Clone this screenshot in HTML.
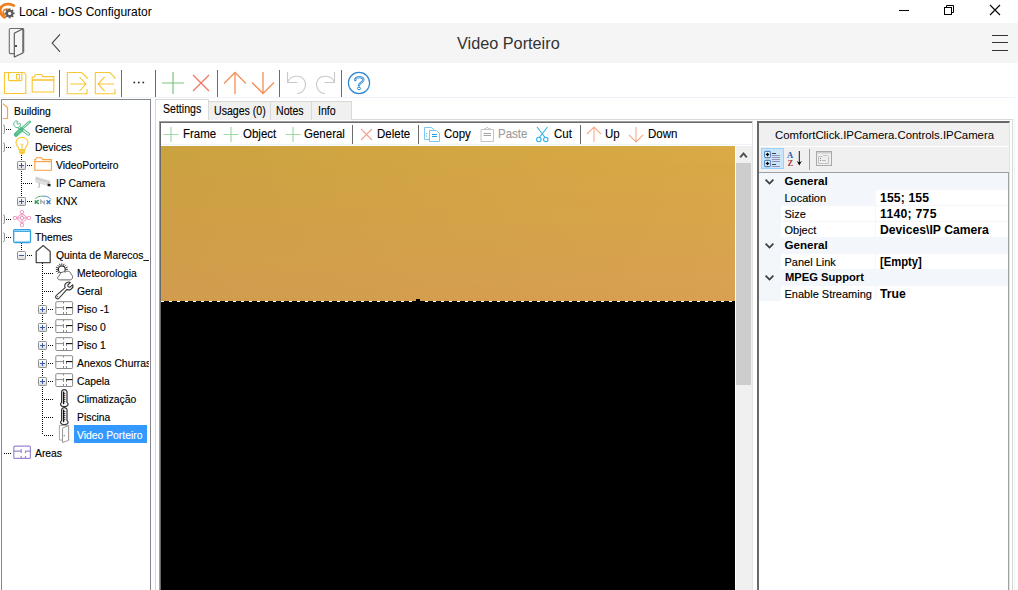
<!DOCTYPE html>
<html><head><meta charset="utf-8">
<style>
*{margin:0;padding:0;box-sizing:border-box}
html,body{width:1018px;height:590px;overflow:hidden;background:#fff;font-family:"Liberation Sans",sans-serif;color:#000}
.a{position:absolute}
.t{position:absolute;white-space:nowrap;line-height:1}
svg{position:absolute;overflow:visible}
.tr{font-size:11.5px;-webkit-text-stroke:0.15px currentColor;transform:scaleX(0.9);transform-origin:0 0;color:#000}
.tb{font-size:12.5px;-webkit-text-stroke:0.12px currentColor;transform:scaleX(0.92);transform-origin:0 0;color:#000}
.pg{font-size:11px;-webkit-text-stroke:0.12px currentColor;color:#000}
.tt{font-size:12.3px;-webkit-text-stroke:0.12px currentColor;transform:scaleX(0.86);transform-origin:0 0;color:#000}
.pc{font-size:11.6px;font-weight:bold;color:#000}
.pb{font-size:12.2px;font-weight:bold;color:#000}
</style></head><body>
<svg style="left:0;top:0" width="20" height="22" viewBox="0 0 20 22">
<path d="M13.8 5.6 C10.5 3.6 4.6 3.4 1.6 6.6 C-0.8 9.2 -0.4 14.4 4.6 17.4" fill="none" stroke="#ef7d1a" stroke-width="2.8" stroke-linecap="round"/>
<path d="M8.6 9.4 C6 8.6 3.4 9.6 3.2 11.8 C3 13.4 4 14.6 5.2 15" fill="none" stroke="#ef7d1a" stroke-width="1.6" stroke-linecap="round"/>
<g transform="translate(9.6 13.4)" fill="#5a5a5a">
<circle r="3.5"/>
<rect x="-1" y="-4.9" width="2" height="9.8"/>
<rect x="-1" y="-4.9" width="2" height="9.8" transform="rotate(45)"/>
<rect x="-1" y="-4.9" width="2" height="9.8" transform="rotate(90)"/>
<rect x="-1" y="-4.9" width="2" height="9.8" transform="rotate(135)"/>
<circle r="1.6" fill="#fff"/>
</g></svg><div class="t" style="left:19px;top:6px;font-size:12px;color:#000">Local - bOS Configurator</div><svg style="left:0;top:0" width="1018" height="22">
<line x1="899" y1="10.5" x2="909" y2="10.5" stroke="#000" stroke-width="1"/>
<rect x="944.5" y="7.5" width="7" height="7" fill="none" stroke="#000" stroke-width="1"/>
<path d="M946.5 7.5 V5.5 H953.5 V12.5 H951.5" fill="none" stroke="#000" stroke-width="1"/>
<path d="M990 5 L1000 15 M1000 5 L990 15" stroke="#000" stroke-width="1.1"/>
</svg><div class="a" style="left:0;top:23px;width:1018px;height:40px;background:#f5f5f5"></div><svg style="left:0;top:23px" width="80" height="40" viewBox="0 23 80 40">
<path d="M14.3 53.6 H10.3 Q9.3 53.6 9.3 52.6 V29.5 Q9.3 28.5 10.3 28.5 H22.7 Q23.7 28.5 23.7 29.5 V52.6" fill="none" stroke="#6e6e6e" stroke-width="1.1"/>
<path d="M14.3 33.3 L22.9 28.8 L22.9 52.9 L14.3 57 Z" fill="#f5f5f5" stroke="#555" stroke-width="1.1" stroke-linejoin="round"/>
<circle cx="16" cy="46" r="0.9" fill="#000"/>
<path d="M60 34.3 L52.2 43.1 L60 51.9" fill="none" stroke="#444" stroke-width="1.1"/>
</svg><div class="t" style="left:457px;top:35px;font-size:16.25px;color:#333">Video Porteiro</div><svg style="left:980px;top:23px" width="38" height="40" viewBox="980 23 38 40">
<path d="M992 35.5 H1008 M992 42.5 H1008 M992 50.5 H1008" stroke="#333" stroke-width="1.1"/>
</svg><svg style="left:0;top:63px" width="400" height="36" viewBox="0 63 400 36">
<g fill="none" stroke="#f9c633" stroke-width="1.1">
<path d="M4.5 72.5 H24 L25.8 74.5 V93.5 H4.5 Z"/>
<path d="M8.5 72.5 V79.8 Q8.5 80.6 9.3 80.6 H21 Q21.8 80.6 21.8 79.8 V72.5"/>
<rect x="16.5" y="74.5" width="3" height="4.5"/>
<path d="M32.2 92 V77 H34.5 L35.3 74.5 H41.8 L42.6 76.6 H53.8 V92 Z"/>
<path d="M32.2 80 H53.8" stroke-width="1.6"/>
<path d="M87 79 V77.5 L81.5 72.5 H67.3 V93.8 H87 V89"/>
<path d="M70.2 84 H86 M79.5 77 L86 84 L79.5 91"/>
<path d="M115 79 V77.5 L109.5 72.5 H95.3 V93.8 H115 V89"/>
<path d="M98 84 H114 M104.6 77 L98 84 L104.6 91"/>
</g>
<g fill="#222"><rect x="133.5" y="81.7" width="1.6" height="1.6"/><rect x="138" y="81.7" width="1.6" height="1.6"/><rect x="142.5" y="81.7" width="1.6" height="1.6"/></g>
<g stroke="#6b6b6b" stroke-width="1">
<line x1="59.5" y1="70" x2="59.5" y2="97"/><line x1="121.5" y1="70" x2="121.5" y2="97"/>
<line x1="155.5" y1="70" x2="155.5" y2="97"/><line x1="217.5" y1="70" x2="217.5" y2="97"/>
<line x1="279.5" y1="70" x2="279.5" y2="97"/><line x1="341.5" y1="70" x2="341.5" y2="97"/>
</g>
<path d="M162 83 H184 M173 72 V94" stroke="#7cc47f" stroke-width="1.2"/>
<path d="M193 75 L209 91 M209 75 L193 91" stroke="#ef7663" stroke-width="1.2"/>
<path d="M235 72.5 V94 M224 83.5 L235 72.5 L246 83.5" fill="none" stroke="#f58f55" stroke-width="1.3"/>
<path d="M263 72 V93.5 M252 82.5 L263 93.5 L274 82.5" fill="none" stroke="#f58f55" stroke-width="1.3"/>
<g fill="none" stroke="#c9c9c9" stroke-width="1.1">
<path d="M287.5 72 V82.5 H297.5"/><path d="M288 81.5 C291 75 301 74.5 304.5 80.5 C307.5 86.5 303 93.5 297 93.5"/>
<path d="M334.5 72 V82.5 H324.5"/><path d="M334 81.5 C331 75 321 74.5 317.5 80.5 C314.5 86.5 319 93.5 325 93.5"/>
</g>
<circle cx="359" cy="83" r="10.6" fill="none" stroke="#2f86d6" stroke-width="1.2"/>
<path d="M355.2 80.2 C355 76.6 363.4 76 363.4 79.8 C363.4 82.4 359.2 82.4 359 85.4" fill="none" stroke="#2f86d6" stroke-width="2.3" stroke-linecap="round"/>
<path d="M355.2 80.2 C355 76.6 363.4 76 363.4 79.8 C363.4 82.4 359.2 82.4 359 85.4" fill="none" stroke="#fff" stroke-width="0.6"/>
<ellipse cx="359" cy="88.4" rx="1.6" ry="1.2" fill="none" stroke="#2f86d6" stroke-width="1"/>
</svg><div class="a" style="left:0;top:97px;width:1015px;height:1px;background:#f0f2f9"></div><div class="a" style="left:1px;top:99px;width:150px;height:500px;border:1px solid #828790;background:#fff;overflow:hidden"><svg style="left:-2px;top:-100px" width="1018" height="590" viewBox="0 0 1018 590"><defs>
<linearGradient id="bx" x1="0" y1="0" x2="0" y2="1"><stop offset="0" stop-color="#fff"/><stop offset="1" stop-color="#dcdcdc"/></linearGradient>
<g id="i_house_o"><path d="M0 17 V5.5 L8 -0.5 L15.5 5.5 V16.5 H2" fill="none" stroke="#f6a24e" stroke-width="1.2"/></g>
<g id="i_tools" fill="none" stroke="#4fbb85">
 <path d="M5.6 7 L15.6 14.2" stroke-width="3" stroke-linecap="round"/>
 <path d="M5.6 7 L15.6 14.2" stroke="#fff" stroke-width="1.1" stroke-linecap="round"/>
 <path d="M3 0.8 C0.8 1.8 0 4.6 1.6 6.4 C3 8 5.6 8 6.8 6.6 C7.6 5.6 7.6 4 6.9 3 L5.2 4.4 L3.8 3.4 L4.8 1.4 Z" fill="#fff" stroke-width="1"/>
 <path d="M16.8 1.8 L9.6 8" stroke-width="2.6" stroke-linecap="round"/>
 <path d="M16.8 1.8 L9.6 8" stroke="#fff" stroke-width="0.8"/>
 <path d="M8.4 9.6 L3 14.6" stroke-width="4.4" stroke-linecap="round"/>
 <path d="M6.8 10.2 L3.4 13.4 M8.2 11.6 L4.8 14.8" stroke="#a8e0c2" stroke-width="0.6"/>
</g>
<g id="i_bulb"><path d="M6 11.5 C6 9 3 7.6 3 4.6 C3 1.6 5.6 -0.6 9 -0.6 C12.4 -0.6 15 1.6 15 4.6 C15 7.6 12 9 12 11.5 Z" fill="#fff" stroke="#f9c633" stroke-width="1.1"/>
 <path d="M7.3 6 L9 7.4 L10.7 6 M9 7.4 V11.5" fill="none" stroke="#f9c633" stroke-width="1"/>
 <rect x="6" y="11.5" width="6" height="3.6" fill="#f9c633"/><path d="M6.5 13.2 H11.5" stroke="#fde59a" stroke-width="0.7"/><path d="M7 15 H11 L10 16.6 H8 Z" fill="#f9c633"/></g>
<g id="i_folder" fill="none" stroke="#f9a040" stroke-width="1.1"><path d="M0.8 14.2 V3.6 H1.4 L2.6 1.7 H7.6 L8.8 3.6 H17.4 V14.2 Z"/><path d="M0.8 5.6 H17.4"/></g>
<g id="i_camera"><path d="M1.8 2.6 L16 6.8 L16.4 9.6 L1.2 5.6 Z" fill="#c9c9c9"/><path d="M1.2 5.6 L16.4 9.6 L16 12.4 L1.6 8.4 Z" fill="#dedede"/><path d="M2.2 3.4 L15.4 7.2" stroke="#eee" stroke-width="0.6"/><path d="M13.6 9.6 L16.6 10.2 L16.4 12.6 L13.6 12 Z" fill="#1a1a1a"/><path d="M5 8.8 L5.6 12.2 L4.4 13.6" fill="none" stroke="#bdbdbd" stroke-width="1.2"/></g>
<g id="i_knx" fill="none"><path d="M1.2 6.8 C3 4.8 6 4.1 8.8 4.1" stroke="#44a85c" stroke-width="0.9"/><path d="M8.8 4.1 C12 4.1 15.6 5 16.8 7.4" stroke="#3a86c8" stroke-width="0.9"/>
 <path d="M1.4 8.2 V11.9 M4.8 8.2 L2 10 L5 11.9" stroke="#3a9e4e" stroke-width="1.4"/>
 <path d="M6.8 11.9 V8.2 L10.4 11.6 V8.2" stroke="#a8a8b2" stroke-width="1.3"/>
 <path d="M12.6 8.2 L16.4 11.9 M16.4 8.2 L12.6 11.9" stroke="#2a7cc7" stroke-width="1.4"/></g>
<g id="i_tasks" fill="none" stroke="#f08bbd" stroke-width="1"><path d="M9 3.5 L3.5 8 L9 13.5 L14.5 8 Z M9 3.5 V13.5 M3.5 8 H14.5"/>
 <g fill="#fff"><rect x="7.5" y="0.5" width="3" height="3" rx="0.8"/><rect x="7.5" y="13.5" width="3" height="3" rx="0.8"/><rect x="0.5" y="6.5" width="3" height="3" rx="0.8"/><rect x="14.5" y="6.5" width="3" height="3" rx="0.8"/><rect x="7.5" y="6.5" width="3" height="3" rx="0.8"/></g></g>
<g id="i_themes"><rect x="0.7" y="1.7" width="16.8" height="12.8" rx="1.2" fill="#fff" stroke="#2ea0e4" stroke-width="1.3"/><path d="M1.3 3.3 H16.9" stroke="#2ea0e4" stroke-width="1.2"/><path d="M1.5 13.4 H16.7" stroke="#9ad4f6" stroke-width="1"/></g>
<g id="i_house"><path d="M2.2 16.6 V5.4 L9.2 -0.4 L16.2 5.4 V16.6 Z" fill="#fff" stroke="#4a4a4a" stroke-width="1.3" stroke-linejoin="round"/></g>
<g id="i_weather"><g stroke="#222" stroke-width="0.9"><path d="M6.8 -0.6 V1.6 M6.8 9.2 V11.4 M0.8 5.4 H3 M10.6 5.4 H12.8 M2.6 1.2 L4.1 2.7 M11 1.2 L9.5 2.7 M2.6 9.6 L4.1 8.1 M4.5 -0.2 L5.2 1.7 M9.1 -0.2 L8.4 1.7 M0.9 3.1 L2.9 3.9 M0.9 7.7 L2.9 6.9 M12.7 3.1 L10.7 3.9"/></g><circle cx="6.8" cy="5.4" r="3.4" fill="#fff" stroke="#222" stroke-width="1.1"/>
 <path d="M4.5 15.8 C2.2 15.8 2 12.2 4.4 11.8 C4.8 8.8 8 7.2 10.6 8 C11.8 6.6 15.6 6.8 16 10.4 C18.4 11 18 15.8 15.4 15.8 Z" fill="#fff" stroke="#666" stroke-width="1"/><path d="M5 16.2 H15" stroke="#bbb" stroke-width="1"/></g>
<g id="i_wrench"><path d="M17.6 2.8 L15 5.2 L13.2 4.8 L12.8 3 L15.4 0.4 C13.2 -0.6 10.4 0.6 9.8 3 C9.6 4 9.8 4.8 10.2 5.6 L1.4 13.4 C0.2 14.4 0.4 16 1.6 16.6 C2.6 17.2 3.6 16.8 4.2 16 L12 7.4 C13 7.9 14.4 8 15.6 7.4 C17.6 6.4 18.4 4.4 17.6 2.8 Z" fill="#fff" stroke="#333" stroke-width="1.1" stroke-linejoin="round"/><circle cx="2.6" cy="14.6" r="0.7" fill="#555"/></g>
<g id="i_floor" fill="none" stroke="#8a8a8a" stroke-width="1"><rect x="0.8" y="1.7" width="16.8" height="12.8" rx="0.8"/><path d="M0.8 7.6 H8.5 M8.5 1.7 V3.5 M8.5 6 V10 M8.5 12 V14.5 M11.5 8 V10 M11.5 12 V14.5"/><path d="M11 7.6 H17.4" stroke="#111" stroke-width="1.1"/></g>
<g id="i_thermo"><path d="M6.6 12.4 V1.8 C6.6 -1 12 -1 12 1.8 V12.4 C13.8 13.6 13.6 16.6 9.3 16.6 C5 16.6 4.8 13.6 6.6 12.4 Z" fill="#fff" stroke="#333" stroke-width="1.2"/><path d="M8.6 1.6 V14.2" stroke="#111" stroke-width="1.4"/><path d="M9.2 3.5 H10.4 M9.2 5.5 H10.4 M9.2 7.5 H10.4 M9.2 9.5 H10.4 M9.2 11.5 H10.4" stroke="#111" stroke-width="0.8"/></g>
<g id="i_door"><path d="M7.4 14 H4.4 V-0.6 H13.6 V14.2" fill="none" stroke="#a8a8a8" stroke-width="1"/><path d="M7.5 2.1 L13.6 -0.5 L13.6 14.3 L7.5 16.5 Z" fill="#fff" stroke="#9a9a9a" stroke-width="1"/><rect x="8.6" y="9.2" width="1.2" height="1" fill="#666"/></g>
<g id="i_areas" fill="none" stroke="#9c88cf" stroke-width="1.2"><rect x="0.8" y="2.2" width="16.6" height="12.2" rx="1"/><path d="M0.8 7.2 H8.5 M8.2 2.2 V3 M8.2 5 V9 M8.2 12 V14.4 M12.5 7 V9 M12.5 12 V14.4 M12 7.2 H17.4"/></g>
</defs><g fill="#000"><rect x="21" y="155" width="1" height="1"/><rect x="21" y="157" width="1" height="1"/><rect x="21" y="159" width="1" height="1"/><rect x="21" y="161" width="1" height="1"/><rect x="21" y="163" width="1" height="1"/><rect x="21" y="165" width="1" height="1"/><rect x="21" y="167" width="1" height="1"/><rect x="21" y="169" width="1" height="1"/><rect x="21" y="171" width="1" height="1"/><rect x="21" y="173" width="1" height="1"/><rect x="21" y="175" width="1" height="1"/><rect x="21" y="177" width="1" height="1"/><rect x="21" y="179" width="1" height="1"/><rect x="21" y="181" width="1" height="1"/><rect x="21" y="183" width="1" height="1"/><rect x="21" y="185" width="1" height="1"/><rect x="21" y="187" width="1" height="1"/><rect x="21" y="189" width="1" height="1"/><rect x="21" y="191" width="1" height="1"/><rect x="21" y="193" width="1" height="1"/><rect x="21" y="195" width="1" height="1"/><rect x="21" y="197" width="1" height="1"/><rect x="21" y="243" width="1" height="1"/><rect x="21" y="245" width="1" height="1"/><rect x="21" y="247" width="1" height="1"/><rect x="21" y="249" width="1" height="1"/><rect x="21" y="251" width="1" height="1"/><rect x="42" y="263" width="1" height="1"/><rect x="42" y="265" width="1" height="1"/><rect x="42" y="267" width="1" height="1"/><rect x="42" y="269" width="1" height="1"/><rect x="42" y="271" width="1" height="1"/><rect x="42" y="273" width="1" height="1"/><rect x="42" y="275" width="1" height="1"/><rect x="42" y="277" width="1" height="1"/><rect x="42" y="279" width="1" height="1"/><rect x="42" y="281" width="1" height="1"/><rect x="42" y="283" width="1" height="1"/><rect x="42" y="285" width="1" height="1"/><rect x="42" y="287" width="1" height="1"/><rect x="42" y="289" width="1" height="1"/><rect x="42" y="291" width="1" height="1"/><rect x="42" y="293" width="1" height="1"/><rect x="42" y="295" width="1" height="1"/><rect x="42" y="297" width="1" height="1"/><rect x="42" y="299" width="1" height="1"/><rect x="42" y="301" width="1" height="1"/><rect x="42" y="303" width="1" height="1"/><rect x="42" y="305" width="1" height="1"/><rect x="42" y="307" width="1" height="1"/><rect x="42" y="309" width="1" height="1"/><rect x="42" y="311" width="1" height="1"/><rect x="42" y="313" width="1" height="1"/><rect x="42" y="315" width="1" height="1"/><rect x="42" y="317" width="1" height="1"/><rect x="42" y="319" width="1" height="1"/><rect x="42" y="321" width="1" height="1"/><rect x="42" y="323" width="1" height="1"/><rect x="42" y="325" width="1" height="1"/><rect x="42" y="327" width="1" height="1"/><rect x="42" y="329" width="1" height="1"/><rect x="42" y="331" width="1" height="1"/><rect x="42" y="333" width="1" height="1"/><rect x="42" y="335" width="1" height="1"/><rect x="42" y="337" width="1" height="1"/><rect x="42" y="339" width="1" height="1"/><rect x="42" y="341" width="1" height="1"/><rect x="42" y="343" width="1" height="1"/><rect x="42" y="345" width="1" height="1"/><rect x="42" y="347" width="1" height="1"/><rect x="42" y="349" width="1" height="1"/><rect x="42" y="351" width="1" height="1"/><rect x="42" y="353" width="1" height="1"/><rect x="42" y="355" width="1" height="1"/><rect x="42" y="357" width="1" height="1"/><rect x="42" y="359" width="1" height="1"/><rect x="42" y="361" width="1" height="1"/><rect x="42" y="363" width="1" height="1"/><rect x="42" y="365" width="1" height="1"/><rect x="42" y="367" width="1" height="1"/><rect x="42" y="369" width="1" height="1"/><rect x="42" y="371" width="1" height="1"/><rect x="42" y="373" width="1" height="1"/><rect x="42" y="375" width="1" height="1"/><rect x="42" y="377" width="1" height="1"/><rect x="42" y="379" width="1" height="1"/><rect x="42" y="381" width="1" height="1"/><rect x="42" y="383" width="1" height="1"/><rect x="42" y="385" width="1" height="1"/><rect x="42" y="387" width="1" height="1"/><rect x="42" y="389" width="1" height="1"/><rect x="42" y="391" width="1" height="1"/><rect x="42" y="393" width="1" height="1"/><rect x="42" y="395" width="1" height="1"/><rect x="42" y="397" width="1" height="1"/><rect x="42" y="399" width="1" height="1"/><rect x="42" y="401" width="1" height="1"/><rect x="42" y="403" width="1" height="1"/><rect x="42" y="405" width="1" height="1"/><rect x="42" y="407" width="1" height="1"/><rect x="42" y="409" width="1" height="1"/><rect x="42" y="411" width="1" height="1"/><rect x="42" y="413" width="1" height="1"/><rect x="42" y="415" width="1" height="1"/><rect x="42" y="417" width="1" height="1"/><rect x="42" y="419" width="1" height="1"/><rect x="42" y="421" width="1" height="1"/><rect x="42" y="423" width="1" height="1"/><rect x="42" y="425" width="1" height="1"/><rect x="42" y="427" width="1" height="1"/><rect x="42" y="429" width="1" height="1"/><rect x="42" y="431" width="1" height="1"/><rect x="42" y="433" width="1" height="1"/><rect x="6" y="129" width="1" height="1"/><rect x="8" y="129" width="1" height="1"/><rect x="10" y="129" width="1" height="1"/><rect x="6" y="147" width="1" height="1"/><rect x="8" y="147" width="1" height="1"/><rect x="10" y="147" width="1" height="1"/><rect x="27" y="165" width="1" height="1"/><rect x="29" y="165" width="1" height="1"/><rect x="31" y="165" width="1" height="1"/><rect x="23" y="183" width="1" height="1"/><rect x="25" y="183" width="1" height="1"/><rect x="27" y="183" width="1" height="1"/><rect x="29" y="183" width="1" height="1"/><rect x="31" y="183" width="1" height="1"/><rect x="27" y="201" width="1" height="1"/><rect x="29" y="201" width="1" height="1"/><rect x="31" y="201" width="1" height="1"/><rect x="6" y="219" width="1" height="1"/><rect x="8" y="219" width="1" height="1"/><rect x="10" y="219" width="1" height="1"/><rect x="6" y="237" width="1" height="1"/><rect x="8" y="237" width="1" height="1"/><rect x="10" y="237" width="1" height="1"/><rect x="27" y="255" width="1" height="1"/><rect x="29" y="255" width="1" height="1"/><rect x="31" y="255" width="1" height="1"/><rect x="44" y="273" width="1" height="1"/><rect x="46" y="273" width="1" height="1"/><rect x="48" y="273" width="1" height="1"/><rect x="50" y="273" width="1" height="1"/><rect x="52" y="273" width="1" height="1"/><rect x="44" y="291" width="1" height="1"/><rect x="46" y="291" width="1" height="1"/><rect x="48" y="291" width="1" height="1"/><rect x="50" y="291" width="1" height="1"/><rect x="52" y="291" width="1" height="1"/><rect x="48" y="309" width="1" height="1"/><rect x="50" y="309" width="1" height="1"/><rect x="52" y="309" width="1" height="1"/><rect x="48" y="327" width="1" height="1"/><rect x="50" y="327" width="1" height="1"/><rect x="52" y="327" width="1" height="1"/><rect x="48" y="345" width="1" height="1"/><rect x="50" y="345" width="1" height="1"/><rect x="52" y="345" width="1" height="1"/><rect x="48" y="363" width="1" height="1"/><rect x="50" y="363" width="1" height="1"/><rect x="52" y="363" width="1" height="1"/><rect x="48" y="381" width="1" height="1"/><rect x="50" y="381" width="1" height="1"/><rect x="52" y="381" width="1" height="1"/><rect x="44" y="399" width="1" height="1"/><rect x="46" y="399" width="1" height="1"/><rect x="48" y="399" width="1" height="1"/><rect x="50" y="399" width="1" height="1"/><rect x="52" y="399" width="1" height="1"/><rect x="44" y="417" width="1" height="1"/><rect x="46" y="417" width="1" height="1"/><rect x="48" y="417" width="1" height="1"/><rect x="50" y="417" width="1" height="1"/><rect x="52" y="417" width="1" height="1"/><rect x="44" y="435" width="1" height="1"/><rect x="46" y="435" width="1" height="1"/><rect x="48" y="435" width="1" height="1"/><rect x="50" y="435" width="1" height="1"/><rect x="52" y="435" width="1" height="1"/><rect x="4" y="453" width="1" height="1"/><rect x="6" y="453" width="1" height="1"/><rect x="8" y="453" width="1" height="1"/><rect x="10" y="453" width="1" height="1"/></g><use href="#i_house_o" x="-8" y="102"/><path d="M2.6 125 H3.6 Q4.4 125 4.4 125.8 V132.7 Q4.4 133.5 3.6 133.5 H2.6" fill="none" stroke="#8e8f8f" stroke-width="1"/><use href="#i_tools" x="13" y="120"/><path d="M2.6 143 H3.6 Q4.4 143 4.4 143.8 V150.7 Q4.4 151.5 3.6 151.5 H2.6" fill="none" stroke="#8e8f8f" stroke-width="1"/><use href="#i_bulb" x="13" y="138"/><rect x="17.5" y="161.5" width="8" height="8" rx="0.8" fill="url(#bx)" stroke="#8e8f8f" stroke-width="1"/><path d="M19 165.5 H24" stroke="#3b5aa6" stroke-width="1"/><path d="M21.5 163 V168" stroke="#3b5aa6" stroke-width="1"/><use href="#i_folder" x="34" y="156"/><use href="#i_camera" x="34" y="174"/><rect x="17.5" y="197.5" width="8" height="8" rx="0.8" fill="url(#bx)" stroke="#8e8f8f" stroke-width="1"/><path d="M19 201.5 H24" stroke="#3b5aa6" stroke-width="1"/><path d="M21.5 199 V204" stroke="#3b5aa6" stroke-width="1"/><use href="#i_knx" x="34" y="192"/><path d="M2.6 215 H3.6 Q4.4 215 4.4 215.8 V222.7 Q4.4 223.5 3.6 223.5 H2.6" fill="none" stroke="#8e8f8f" stroke-width="1"/><use href="#i_tasks" x="13" y="210"/><path d="M2.6 233 H3.6 Q4.4 233 4.4 233.8 V240.7 Q4.4 241.5 3.6 241.5 H2.6" fill="none" stroke="#8e8f8f" stroke-width="1"/><use href="#i_themes" x="13" y="228"/><rect x="17.5" y="251.5" width="8" height="8" rx="0.8" fill="url(#bx)" stroke="#8e8f8f" stroke-width="1"/><path d="M19 255.5 H24" stroke="#3b5aa6" stroke-width="1"/><use href="#i_house" x="34" y="246"/><use href="#i_weather" x="55" y="264"/><use href="#i_wrench" x="55" y="282"/><rect x="38.5" y="305.5" width="8" height="8" rx="0.8" fill="url(#bx)" stroke="#8e8f8f" stroke-width="1"/><path d="M40 309.5 H45" stroke="#3b5aa6" stroke-width="1"/><path d="M42.5 307 V312" stroke="#3b5aa6" stroke-width="1"/><use href="#i_floor" x="55" y="300"/><rect x="38.5" y="323.5" width="8" height="8" rx="0.8" fill="url(#bx)" stroke="#8e8f8f" stroke-width="1"/><path d="M40 327.5 H45" stroke="#3b5aa6" stroke-width="1"/><path d="M42.5 325 V330" stroke="#3b5aa6" stroke-width="1"/><use href="#i_floor" x="55" y="318"/><rect x="38.5" y="341.5" width="8" height="8" rx="0.8" fill="url(#bx)" stroke="#8e8f8f" stroke-width="1"/><path d="M40 345.5 H45" stroke="#3b5aa6" stroke-width="1"/><path d="M42.5 343 V348" stroke="#3b5aa6" stroke-width="1"/><use href="#i_floor" x="55" y="336"/><rect x="38.5" y="359.5" width="8" height="8" rx="0.8" fill="url(#bx)" stroke="#8e8f8f" stroke-width="1"/><path d="M40 363.5 H45" stroke="#3b5aa6" stroke-width="1"/><path d="M42.5 361 V366" stroke="#3b5aa6" stroke-width="1"/><use href="#i_floor" x="55" y="354"/><rect x="38.5" y="377.5" width="8" height="8" rx="0.8" fill="url(#bx)" stroke="#8e8f8f" stroke-width="1"/><path d="M40 381.5 H45" stroke="#3b5aa6" stroke-width="1"/><path d="M42.5 379 V384" stroke="#3b5aa6" stroke-width="1"/><use href="#i_floor" x="55" y="372"/><use href="#i_thermo" x="55" y="390"/><use href="#i_thermo" x="55" y="408"/><rect x="74" y="425" width="73" height="18" fill="#3399ff"/><use href="#i_door" x="55" y="426"/><use href="#i_areas" x="13" y="444"/></svg><div class="a" style="left:0;top:0;width:147px;height:498px;overflow:hidden"><div class="t tr" style="left:12px;top:6.0px">Building</div><div class="t tr" style="left:33px;top:24.0px">General</div><div class="t tr" style="left:33px;top:42.0px">Devices</div><div class="t tr" style="left:54px;top:60.0px">VideoPorteiro</div><div class="t tr" style="left:54px;top:78.0px">IP Camera</div><div class="t tr" style="left:54px;top:96.0px">KNX</div><div class="t tr" style="left:33px;top:114.0px">Tasks</div><div class="t tr" style="left:33px;top:132.0px">Themes</div><div class="t tr" style="left:54px;top:150.0px">Quinta de Marecos_</div><div class="t tr" style="left:75px;top:168.0px">Meteorologia</div><div class="t tr" style="left:75px;top:186.0px">Geral</div><div class="t tr" style="left:75px;top:204.0px">Piso -1</div><div class="t tr" style="left:75px;top:222.0px">Piso 0</div><div class="t tr" style="left:75px;top:240.0px">Piso 1</div><div class="t tr" style="left:75px;top:258.0px">Anexos Churrasqueira</div><div class="t tr" style="left:75px;top:276.0px">Capela</div><div class="t tr" style="left:75px;top:294.0px">Climatização</div><div class="t tr" style="left:75px;top:312.0px">Piscina</div><div class="t tr" style="left:75px;top:330.0px;color:#fff">Video Porteiro</div><div class="t tr" style="left:33px;top:348.0px">Areas</div></div><div class="a" style="left:0;top:0;width:1px;height:498px;background:#fff"></div></div><div class="a" style="left:155px;top:119px;width:858px;height:480px;border:1px solid #d9d9d9;background:#fff"></div><div class="a" style="left:1014px;top:119px;width:1px;height:480px;background:#f3f3f3"></div><div class="a" style="left:208px;top:101px;width:63px;height:19px;border:1px solid #d9d9d9;border-bottom:none;background:#f0f0f0"></div><div class="t tt" style="left:213.5px;top:104.6px">Usages (0)</div><div class="a" style="left:270px;top:101px;width:42px;height:19px;border:1px solid #d9d9d9;border-bottom:none;background:#f0f0f0"></div><div class="t tt" style="left:276px;top:104.6px">Notes</div><div class="a" style="left:311px;top:101px;width:41px;height:19px;border:1px solid #d9d9d9;border-bottom:none;background:#f0f0f0"></div><div class="t tt" style="left:318px;top:104.6px">Info</div><div class="a" style="left:155px;top:99px;width:54px;height:21px;border:1px solid #d9d9d9;border-bottom:none;background:#fff"></div><div class="a" style="left:156px;top:119px;width:52px;height:1px;background:#fff"></div><div class="t tt" style="left:163px;top:103.4px">Settings</div><div class="a" style="left:159px;top:121px;width:594px;height:480px;border-top:1px solid #a0a0a0;border-left:1px solid #a0a0a0;border-right:1px solid #e3e3e3"></div><div class="a" style="left:160px;top:122px;width:592px;height:480px;border-top:1px solid #696969;border-left:1px solid #696969"></div><div class="a" style="left:161px;top:144px;width:591px;height:1px;background:#eef3fa"></div><div class="t tb" style="left:183px;top:127.5px;color:#000">Frame</div><div class="t tb" style="left:243px;top:127.5px;color:#000">Object</div><div class="t tb" style="left:304px;top:127.5px;color:#000">General</div><div class="t tb" style="left:377px;top:127.5px;color:#000">Delete</div><div class="t tb" style="left:443.5px;top:127.5px;color:#000">Copy</div><div class="t tb" style="left:498px;top:127.5px;color:#9a9a9a">Paste</div><div class="t tb" style="left:553.5px;top:127.5px;color:#000">Cut</div><div class="t tb" style="left:605px;top:127.5px;color:#000">Up</div><div class="t tb" style="left:647.5px;top:127.5px;color:#000">Down</div><svg style="left:0;top:0" width="1018" height="150" viewBox="0 0 1018 150">
<g stroke="#a2dba5" stroke-width="1.2" fill="none">
<path d="M163.5 134.5 H178.5 M171 127 V142"/><path d="M223.5 134.5 H238.5 M231 127 V142"/><path d="M285.5 134.5 H300.5 M293 127 V142"/>
</g>
<path d="M361 129 L372 140 M372 129 L361 140" stroke="#f2a094" stroke-width="1.1"/>
<g stroke="#6b6b6b" stroke-width="1"><line x1="352.5" y1="125" x2="352.5" y2="144"/><line x1="418.5" y1="125" x2="418.5" y2="144"/><line x1="580.5" y1="125" x2="580.5" y2="144"/></g>
<g fill="#fff" stroke="#7cc8f0" stroke-width="1">
<path d="M424.5 127.5 H431.5 L434.5 130.5 V139.5 H424.5 Z"/>
<path d="M429.5 130.5 H436.5 L439.5 133.5 V141.5 H429.5 Z"/>
</g>
<path d="M432 134.5 H437 M432 136.5 H437" stroke="#1ea0e6" stroke-width="1"/>
<path d="M426.5 133 V134 M426.5 135.6 V136.6" stroke="#4bb3ea" stroke-width="1"/>
<g fill="none" stroke="#c4c4c4" stroke-width="1"><path d="M481 129.5 H493.5 V141.5 H481 Z"/><path d="M484.5 129.5 V128.5 H486 L487.2 127 L488.5 128.5 H490 V129.5"/><path d="M483.5 133.5 H491 M483.5 135.5 H491" stroke="#a5a5a5"/></g>
<g fill="none" stroke="#2eb1ea" stroke-width="1.1"><path d="M537 127 L545.5 138 M547.5 127 L539 138"/><circle cx="538.8" cy="139.5" r="2.2"/><circle cx="545.8" cy="139.5" r="2.2"/></g>
<path d="M594 127 V142 M587 134 L594 127 L601 134" fill="none" stroke="#f7ab8c" stroke-width="1.1"/>
<path d="M636 127 V142 M629 135 L636 142 L643 135" fill="none" stroke="#f7ab8c" stroke-width="1.1"/>
</svg><div class="a" style="left:161px;top:146.0px;width:574px;height:16.1px;background:linear-gradient(to right,rgb(203, 162, 64),rgb(217, 170, 69))"></div><div class="a" style="left:161px;top:161.5px;width:574px;height:16.1px;background:linear-gradient(to right,rgb(204, 161, 65),rgb(217, 168, 70))"></div><div class="a" style="left:161px;top:177.0px;width:574px;height:16.1px;background:linear-gradient(to right,rgb(204, 160, 67),rgb(217, 168, 72))"></div><div class="a" style="left:161px;top:192.5px;width:574px;height:16.1px;background:linear-gradient(to right,rgb(205, 160, 68),rgb(217, 166, 73))"></div><div class="a" style="left:161px;top:208.0px;width:574px;height:16.1px;background:linear-gradient(to right,rgb(206, 159, 70),rgb(217, 166, 74))"></div><div class="a" style="left:161px;top:223.5px;width:574px;height:16.1px;background:linear-gradient(to right,rgb(206, 159, 71),rgb(216, 164, 76))"></div><div class="a" style="left:161px;top:239.0px;width:574px;height:16.1px;background:linear-gradient(to right,rgb(207, 158, 73),rgb(216, 164, 77))"></div><div class="a" style="left:161px;top:254.5px;width:574px;height:16.1px;background:linear-gradient(to right,rgb(208, 158, 74),rgb(216, 162, 78))"></div><div class="a" style="left:161px;top:270.0px;width:574px;height:16.1px;background:linear-gradient(to right,rgb(208, 157, 76),rgb(216, 162, 80))"></div><div class="a" style="left:161px;top:285.5px;width:574px;height:16.1px;background:linear-gradient(to right,rgb(209, 156, 77),rgb(216, 160, 81))"></div><div class="a" style="left:161px;top:301px;width:574px;height:1px;background:repeating-linear-gradient(to right,#fff 0 3px,#000 3px 8px)"></div><div class="a" style="left:161px;top:302px;width:574px;height:300px;background:#000"></div><div class="a" style="left:416px;top:299px;width:4px;height:3px;background:#000"></div><div class="a" style="left:736px;top:146px;width:16px;height:450px;background:#f0f0f0"></div><div class="a" style="left:736px;top:163px;width:15px;height:222px;background:#cdcdcd"></div><svg style="left:736px;top:146px" width="16" height="17" viewBox="736 146 16 17"><path d="M740.2 157.4 L743.5 153.4 L746.8 157.4" fill="none" stroke="#505050" stroke-width="1.9"/></svg><div class="a" style="left:757px;top:121px;width:253px;height:480px;border-top:2px solid #696969;border-left:2px solid #696969;border-right:1px solid #e3e3e3;background:#fff"></div><div class="a" style="left:759px;top:123px;width:250px;height:23px;background:#f0f0f0"></div><div class="t" style="left:775px;top:129.5px;font-size:11.36px">ComfortClick.IPCamera.Controls.IPCamera</div><div class="a" style="left:759px;top:147px;width:250px;height:25px;background:#f0f0f0"></div><div class="a" style="left:759px;top:172px;width:250px;height:1px;background:#a0a0a0"></div><div class="a" style="left:1008px;top:172px;width:1px;height:430px;background:#a0a0a0"></div><svg style="left:0;top:0" width="1018" height="590" viewBox="0 0 1018 590">
<rect x="761.5" y="148.5" width="22" height="20" fill="#cce4f7" stroke="#99d1ff" stroke-width="1"/>
<g fill="#fff" stroke="#4f86c6" stroke-width="1.1"><rect x="764.6" y="151.4" width="5.8" height="6.2" rx="1"/><rect x="764.6" y="160.4" width="5.8" height="6.2" rx="1"/></g>
<path d="M765.8 154.5 H769.2 M767.5 152.8 V156.2 M765.8 163.5 H769.2 M767.5 161.8 V165.2" stroke="#000" stroke-width="1.3"/>
<path d="M772 153.5 H776 M772 164.5 H776" stroke="#444" stroke-width="1"/>
<g stroke-width="1"><path d="M772 155.5 H777 M772 157.5 H777 M772 159.5 H777 M772 161.5 H777 M772 166.5 H777" stroke="#9a8fc0" stroke-dasharray="1 0"/>
<path d="M777 155.5 H780 M777 157.5 H780 M777 159.5 H780 M777 161.5 H780 M777 166.5 H780" stroke="#8aa0a8"/></g>
<text x="787" y="158" font-family="Liberation Serif" font-weight="bold" font-size="8.5" fill="#2a5cb8">A</text>
<text x="787.5" y="166" font-family="Liberation Serif" font-weight="bold" font-size="8.5" fill="#b03a3a">Z</text>
<path d="M799.3 151 V163" fill="none" stroke="#000" stroke-width="0.9"/><path d="M796.8 161 L799.3 165.6 L801.8 161 L799.3 162.6 Z" fill="#000"/>
<line x1="809.5" y1="149" x2="809.5" y2="170" stroke="#a0a0a0"/>
<rect x="816.5" y="151.5" width="15" height="14" fill="#efefef" stroke="#a9a9a9"/>
<rect x="817" y="152" width="14" height="1.6" fill="#cfcfcf"/>
<path d="M818.5 163.5 V156.5 H822.5 L823.5 155.5 H827.5 L828.5 156.5 V163.5 Z" fill="none" stroke="#bdbdbd" stroke-width="0.9"/>
<rect x="820" y="158" width="1" height="1" fill="#888"/><rect x="820" y="160" width="1" height="1" fill="#888"/><path d="M822 160.5 H826" stroke="#aaa" stroke-width="0.8"/>
</svg><div class="a" style="left:759px;top:173px;width:249px;height:128px;background:#f3f6fb"></div><div class="t pc" style="left:784.5px;top:175.2px;">General</div><div class="a" style="left:876px;top:190px;width:132px;height:15px;background:#fff"></div><div class="t pg" style="left:784.5px;top:192.7px">Location</div><div class="t pb" style="left:880px;top:191.7px;letter-spacing:0.12px;">155; 155</div><div class="a" style="left:781px;top:206px;width:94px;height:15px;background:#fff"></div><div class="a" style="left:876px;top:206px;width:132px;height:15px;background:#fff"></div><div class="t pg" style="left:784.5px;top:208.7px">Size</div><div class="t pb" style="left:880px;top:207.7px;letter-spacing:0.28px;">1140; 775</div><div class="a" style="left:781px;top:222px;width:94px;height:15px;background:#fff"></div><div class="a" style="left:876px;top:222px;width:132px;height:15px;background:#fff"></div><div class="t pg" style="left:784.5px;top:224.7px">Object</div><div class="t pb" style="left:880px;top:223.7px;">Devices\IP Camera</div><div class="t pc" style="left:784.5px;top:239.2px;">General</div><div class="a" style="left:781px;top:254px;width:94px;height:15px;background:#fff"></div><div class="a" style="left:876px;top:254px;width:132px;height:15px;background:#fff"></div><div class="t pg" style="left:784.5px;top:256.7px">Panel Link</div><div class="t pb" style="left:880px;top:255.7px;transform:scaleX(0.92);transform-origin:0 0;">[Empty]</div><div class="t pc" style="left:784.5px;top:271.2px;transform:scaleX(0.965);transform-origin:0 0;">MPEG Support</div><div class="a" style="left:781px;top:286px;width:94px;height:15px;background:#fff"></div><div class="a" style="left:876px;top:286px;width:132px;height:15px;background:#fff"></div><div class="t pg" style="left:784.5px;top:288.7px">Enable Streaming</div><div class="t pb" style="left:880px;top:287.7px;">True</div><svg style="left:0;top:0" width="1018" height="590" viewBox="0 0 1018 590"><path d="M765.6 179.6 L769.5 183.5 L773.4 179.6" fill="none" stroke="#3c3c3c" stroke-width="1.7"/><path d="M765.6 243.6 L769.5 247.5 L773.4 243.6" fill="none" stroke="#3c3c3c" stroke-width="1.7"/><path d="M765.6 275.6 L769.5 279.5 L773.4 275.6" fill="none" stroke="#3c3c3c" stroke-width="1.7"/></svg></body></html>
